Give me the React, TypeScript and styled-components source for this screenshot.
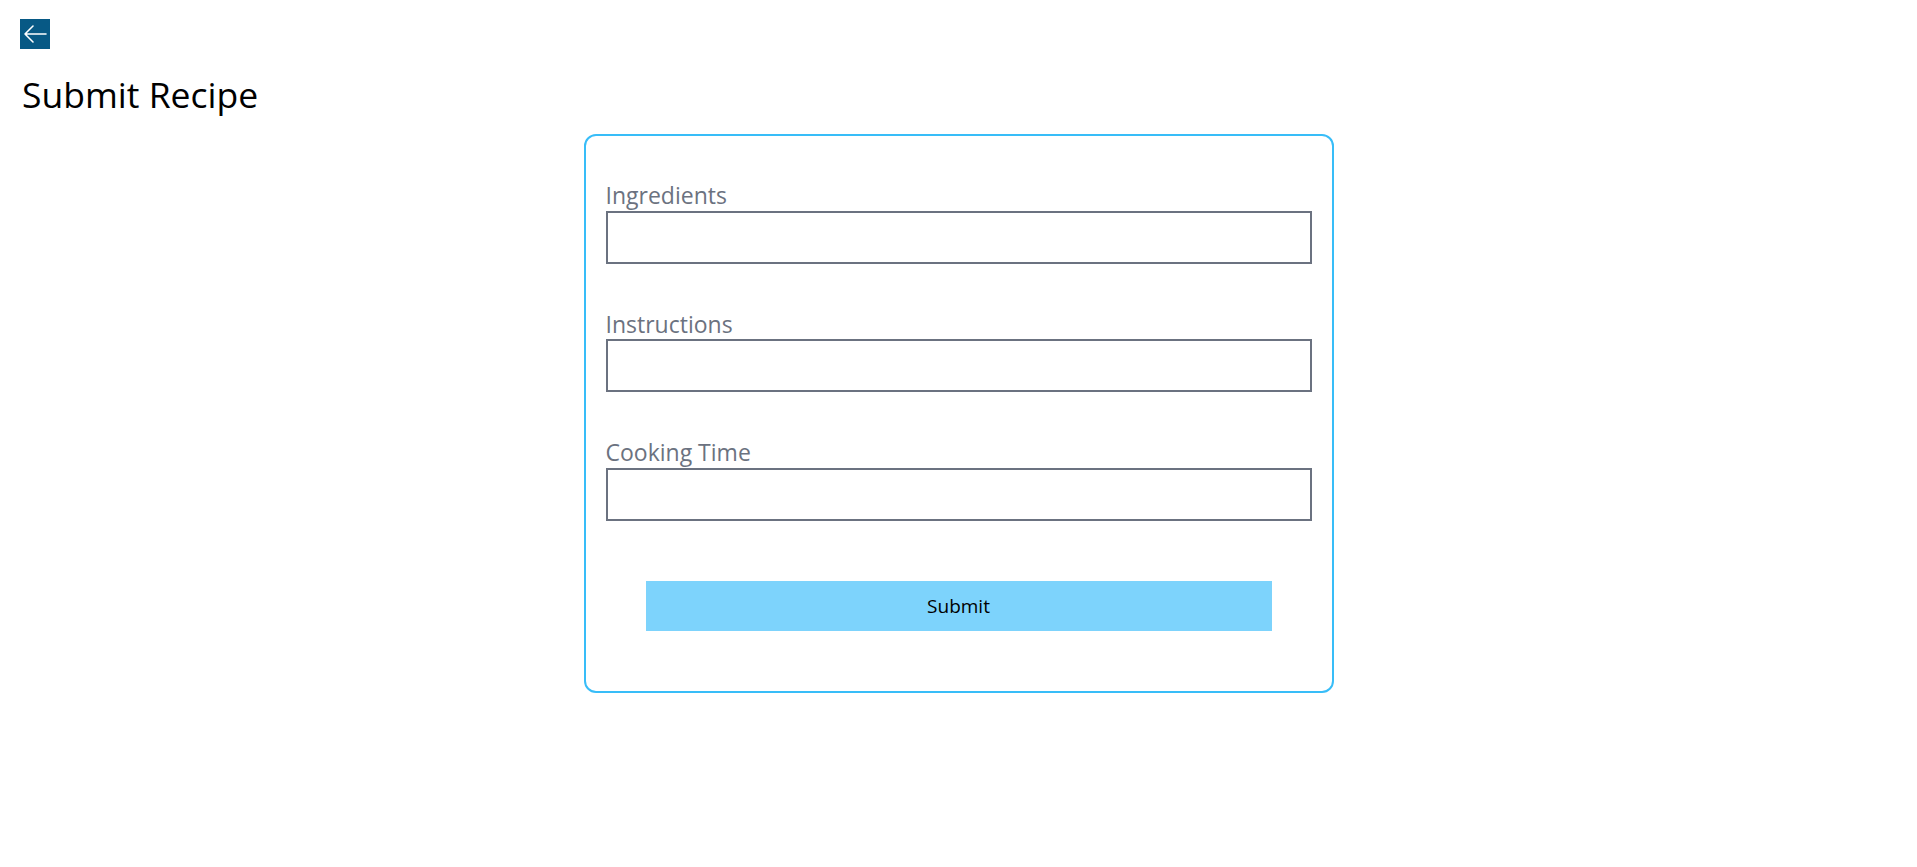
import styled, { createGlobalStyle } from 'styled-components';

const GlobalStyle = createGlobalStyle`
  * {
    box-sizing: border-box;
  }
  body {
    margin: 0;
    font-family: 'Open Sans', 'Noto Sans', sans-serif;
    background: #ffffff;
    color: #000000;
  }
`;

const Page = styled.div`
  padding: 19px 20px;
`;

const BackButton = styled.button`
  width: 30px;
  height: 30px;
  padding: 0;
  border: none;
  background-color: #075985;
  display: flex;
  align-items: center;
  justify-content: center;
  cursor: pointer;
`;

const Title = styled.h1`
  font-size: 35.5px;
  font-weight: 400;
  margin: 22px 0 0 2px;
  line-height: 1.3;
`;

const Card = styled.form`
  width: 750px;
  margin: 17px auto 0;
  border: 2px solid #38bdf8;
  border-radius: 12px;
  padding: 46px 20px 60px;
  display: flex;
  flex-direction: column;
`;

const Field = styled.div`
  display: flex;
  flex-direction: column;
  margin-bottom: 47px;
`;

const Label = styled.label`
  font-size: 23px;
  color: #6b7280;
  line-height: 1.2;
  margin-bottom: 1px;
`;

const Input = styled.input`
  height: 53px;
  width: 100%;
  border: 2px solid #6b7280;
  font-size: 18px;
  font-family: inherit;
  padding: 0 10px;
  outline: none;
`;

const SubmitButton = styled.button`
  align-self: center;
  width: 626px;
  height: 50px;
  margin-top: 13px;
  border: none;
  background-color: #7dd3fc;
  color: #000000;
  font-family: inherit;
  font-size: 19px;
  cursor: pointer;
`;

const fields = ['Ingredients', 'Instructions', 'Cooking Time'];

export default function App() {
  return (
    <>
      <GlobalStyle />
      <Page>
        <BackButton aria-label='Back'>
          <svg width='26' height='26' viewBox='0 0 26 26' fill='none'>
            <path
              d='M3 13H24M3 13L11 5M3 13L11 21'
              stroke='#ffffff'
              strokeWidth='1.6'
              strokeLinecap='round'
            />
          </svg>
        </BackButton>
        <Title>Submit Recipe</Title>
        <Card onSubmit={(e) => e.preventDefault()}>
          {fields.map((name) => (
            <Field key={name}>
              <Label>{name}</Label>
              <Input type='text' />
            </Field>
          ))}
          <SubmitButton type='submit'>Submit</SubmitButton>
        </Card>
      </Page>
    </>
  );
}
